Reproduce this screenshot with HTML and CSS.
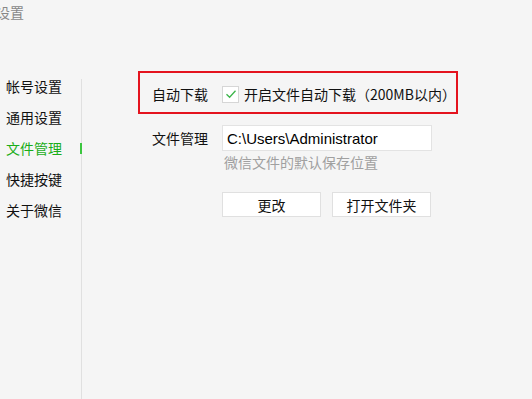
FILE: index.html
```html
<!DOCTYPE html>
<html lang="zh-CN">
<head>
    <meta charset="UTF-8">
    <meta name="viewport" content="width=device-width, initial-scale=1.0">
    <title>设置</title>
    <link rel="stylesheet" href="styles.css">
</head>
<body>
    <div class="titlebar">设置</div>
    <div class="main">
        <ul class="nav">
            <li class="nav-item">帐号设置</li>
            <li class="nav-item">通用设置</li>
            <li class="nav-item active">文件管理</li>
            <li class="nav-item">快捷按键</li>
            <li class="nav-item">关于微信</li>
        </ul>
        <div class="divider"></div>
        <div class="content">
            <div class="row highlight">
                <span class="label">自动下载</span>
                <label class="check">
                    <span class="box">
                        <svg width="14" height="14" viewBox="0 0 14 14">
                            <path d="M2.5 7.2 L5.6 10.2 L11.5 3.8" fill="none" stroke="#3cb54a" stroke-width="1.3"/>
                        </svg>
                    </span>
                    开启文件自动下载（200MB以内）
                </label>
            </div>
            <div class="row plain">
                <span class="label">文件管理</span>
                <input type="text" class="path" value="C:\Users\Administrator" readonly>
            </div>
            <div class="hint">微信文件的默认保存位置</div>
            <div class="buttons">
                <button>更改</button>
                <button>打开文件夹</button>
            </div>
        </div>
    </div>
</body>
</html>
```
FILE: styles.css
```css
body {
    margin: 0;
    background-color: #f5f5f5;
    font-family: "Noto Sans CJK SC", "Noto Sans", sans-serif;
    font-size: 14px;
    color: #111;
    overflow: hidden;
    text-spacing-trim: space-all;
}
.titlebar {
    height: 24px;
    line-height: 24px;
    margin-left: -4px;
    color: #888;
}
.main {
    display: flex;
    margin-top: 47px;
    height: 328px;
}
.nav {
    list-style: none;
    margin: 0;
    padding: 0 0 0 6px;
    width: 75px;
}
.nav-item {
    position: relative;
    height: 31px;
    line-height: 31px;
}
.nav-item.active {
    color: #1aad19;
}
.nav-item.active::after {
    content: "";
    position: absolute;
    right: -1px;
    top: 10px;
    width: 2px;
    height: 11px;
    background-color: #3bc63f;
}
.divider {
    width: 1px;
    margin-top: 8px;
    background-color: #e0e0e0;
}
.content {
    padding-left: 56px;
}
.row {
    display: flex;
    align-items: center;
}
.highlight {
    box-sizing: border-box;
    width: 320px;
    height: 43px;
    padding: 3px 0 0 12px;
    border: 2px solid #e4141e;
}
.plain {
    margin-top: 11px;
    padding-left: 14px;
}
.label {
    width: 70px;
}
.check {
    display: flex;
    align-items: center;
}
.box {
    box-sizing: border-box;
    width: 17px;
    height: 17px;
    margin-right: 5px;
    border: 1px solid #d6d6d6;
    background-color: #fff;
    display: flex;
    align-items: center;
    justify-content: center;
}
.path {
    box-sizing: border-box;
    width: 210px;
    height: 26px;
    padding: 0 4px;
    border: 1px solid #e3e3e3;
    background-color: #fff;
    font-family: "Liberation Sans", Arial, sans-serif;
    font-size: 15px;
    color: #000;
    outline: none;
}
.hint {
    margin-top: 1px;
    padding-left: 86px;
    line-height: 20px;
    color: #a0a0a0;
}
.buttons {
    display: flex;
    gap: 11px;
    margin-top: 20px;
    padding-left: 84px;
}
button {
    box-sizing: border-box;
    width: 99px;
    height: 25px;
    padding: 0;
    border: 1px solid #e0e0e0;
    background-color: #fff;
    font-family: "Noto Sans CJK SC", sans-serif;
    font-size: 14px;
    color: #111;
}
```
